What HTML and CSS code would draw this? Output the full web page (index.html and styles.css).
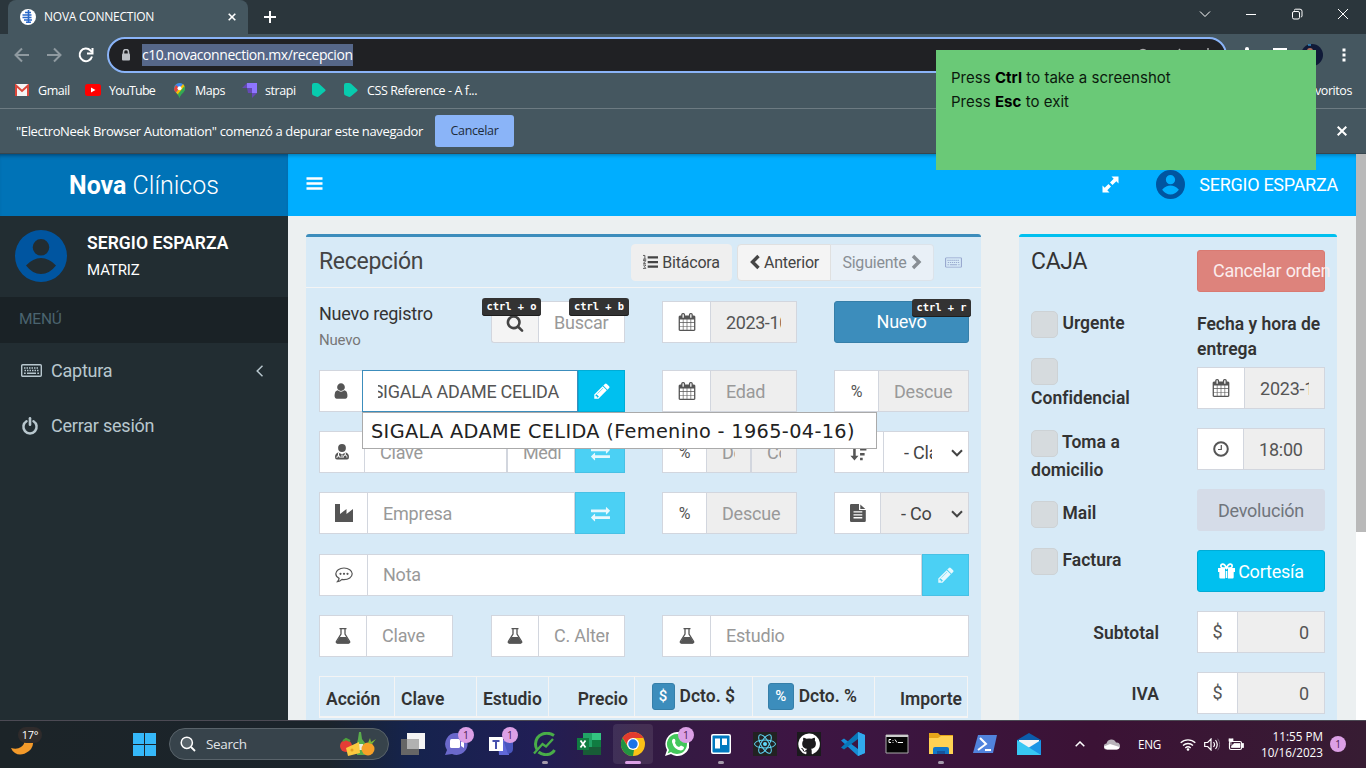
FILE: index.html
```html
<!DOCTYPE html>
<html lang="es">
<head>
<meta charset="utf-8">
<title>NOVA CONNECTION</title>
<link rel="stylesheet" href="styles.css">
</head>
<body>
<svg class="defs" aria-hidden="true">
  <symbol id="user" viewBox="0 0 1792 1792"><path d="M1536 1399q0 109-62.5 187t-150.5 78h-854q-88 0-150.5-78t-62.5-187q0-85 8.5-160.5t31.5-152 58.5-131 94-89 134.5-34.5q131 128 313 128t313-128q76 0 134.5 34.5t94 89 58.5 131 31.5 152 8.5 160.5zm-256-887q0 159-112.5 271.5t-271.5 112.5-271.5-112.5-112.5-271.5 112.5-271.5 271.5-112.5 271.5 112.5 112.5 271.5z"/></symbol>
  <symbol id="pencil" viewBox="0 0 1792 1792"><path d="M491 1536l91-91-235-235-91 91v107h128v128h107zm523-928q0-22-22-22-10 0-17 7l-542 542q-7 7-7 17 0 22 22 22 10 0 17-7l542-542q7-7 7-17zm-54-192l416 416-832 832h-416v-416zm683 96q0 53-37 90l-166 166-416-416 166-165q36-38 90-38 53 0 91 38l235 234q37 39 37 91z"/></symbol>
  <symbol id="calendar" viewBox="0 0 1792 1792"><path d="M192 1664h288v-288h-288v288zm352 0h320v-288h-320v288zm-352-352h288v-320h-288v320zm352 0h320v-320h-320v320zm-352-384h288v-288h-288v288zm736 736h320v-288h-320v288zm-384-736h320v-288h-320v288zm768 736h288v-288h-288v288zm-384-352h320v-320h-320v320zm-352-864v-288q0-13-9.500-22.500t-22.500-9.500h-64q-13 0-22.500 9.500t-9.500 22.500v288q0 13 9.500 22.500t22.500 9.500h64q13 0 22.500-9.500t9.500-22.500zm736 864h288v-320h-288v320zm-384-384h320v-288h-320v288zm384 0h288v-288h-288v288zm32-480v-288q0-13-9.500-22.500t-22.500-9.500h-64q-13 0-22.500 9.500t-9.500 22.500v288q0 13 9.500 22.500t22.500 9.500h64q13 0 22.500-9.500t9.500-22.500zm384-64v1280q0 52-38 90t-90 38h-1408q-52 0-90-38t-38-90v-1280q0-52 38-90t90-38h128v-96q0-66 47-113t113-47h64q66 0 113 47t47 113v96h384v-96q0-66 47-113t113-47h64q66 0 113 47t47 113v96h128q52 0 90 38t38 90z"/></symbol>
  <symbol id="search" viewBox="0 0 1792 1792"><path d="M1216 832q0-185-131.500-316.500t-316.500-131.500-316.500 131.500-131.500 316.500 131.500 316.500 316.500 131.500 316.500-131.500 131.500-316.500zm512 832q0 52-38 90t-90 38q-54 0-90-38l-343-342q-179 124-399 124-143 0-273.500-55.500t-225-150-150-225-55.500-273.500 55.500-273.500 150-225 225-150 273.500-55.500 273.500 55.500 225 150 150 225 55.500 273.500q0 220-124 399l343 343q37 37 37 90z"/></symbol>
  <symbol id="power" viewBox="0 0 18 18"><path d="M5.500 4.200a6.600 6.600 0 1 0 7 0" fill="none" stroke="currentColor" stroke-width="2.500" stroke-linecap="round"/><path d="M9 1.300v6.500" stroke="currentColor" stroke-width="2.600" stroke-linecap="round"/></symbol>
  <symbol id="exchange" viewBox="0 0 1792 1792"><path d="M1792 1184v192q0 13-9.500 22.500t-22.500 9.500h-1376v192q0 13-9.500 22.500t-22.500 9.500q-12 0-24-10l-319-320q-9-9-9-22 0-14 9-23l320-320q9-9 23-9 13 0 22.500 9.500t9.500 22.500v192h1376q13 0 22.500 9.500t9.500 22.500zm0-544q0 14-9 23l-320 320q-9 9-23 9-13 0-22.500-9.500t-9.500-22.500v-192h-1376q-13 0-22.500-9.500t-9.500-22.500v-192q0-13 9.500-22.500t22.500-9.500h1376v-192q0-14 9-23t23-9q12 0 24 10l319 319q9 9 9 23z"/></symbol>
  <symbol id="doctor" viewBox="0 0 14 16"><circle cx="7" cy="4" r="3.900"/><path d="M3 8.500Q0 9.500 0 13q0 2.500 2 2.500h10q2 0 2-2.500 0-3.500-3-4.500L7 10.300z"/><path d="M3.500 9v3.500M2 14v-.8a1.500 1.500 0 0 1 3 0v.8M10.300 9v2.200M8.500 13.500v-.8a1.700 1.700 0 0 1 3.400 0v.8M7 10.500V14" stroke="#fff" fill="none"/></symbol>
  <symbol id="industry" viewBox="0 0 18 18"><path d="M0 0h5v10l6.500-5v5L18 5v13H0z"/></symbol>
  <symbol id="comment" viewBox="0 0 18 16"><path d="M9 1c4.500 0 8.200 2.600 8.200 5.800S13.500 12.600 9 12.600q-1 0-2-.2-2 2-4.500 2.200 1.300-1.300 1.600-3.200C2 10.300.8 8.700.8 6.800.8 3.600 4.500 1 9 1z" fill="none" stroke="currentColor" stroke-width="1.200"/><circle cx="5.500" cy="6.800" r="1.100"/><circle cx="9" cy="6.800" r="1.100"/><circle cx="12.500" cy="6.800" r="1.100"/></symbol>
  <symbol id="flask" viewBox="0 0 16 16"><path d="M4.500.7h7M6 1v5L1.500 13.200Q.7 15 2.500 15h11q1.800 0 1-1.800L10 6V1" fill="none" stroke="currentColor" stroke-width="1.300"/><path d="M4.500 9h7l3 5q0 1.500-1 1.500h-11q-1.500 0-1-1.500z"/></symbol>
  <symbol id="sort" viewBox="0 0 17 17"><path d="M3 0h2.400v12H8l-3.800 4.500L.4 12H3zM9.500 0H17v2.400H9.500zM9.500 4.700h6V7h-6zM9.500 9.400h4.300v2.300H9.500zM9.500 14H12v2.400H9.500z"/></symbol>
  <symbol id="file" viewBox="0 0 16 18"><path fill-rule="evenodd" d="M1.300 0H9v6h6.800v10.800Q15.800 18 14.500 18H1.300Q0 18 0 16.800V1.200Q0 0 1.300 0zm2.200 7.300v1.300h8.800V7.300zm0 2.900v1.300h8.800v-1.300zm0 2.900v1.300h8.800v-1.300zM10.300.4l5 4.500h-5z"/></symbol>
  <symbol id="clock" viewBox="0 0 16 16"><circle cx="8" cy="8" r="6.800" fill="none" stroke="currentColor" stroke-width="2"/><path d="M8.300 4v4.500H5" fill="none" stroke="currentColor" stroke-width="1.200"/></symbol>
  <symbol id="gift" viewBox="0 0 17 16"><path d="M0 5h7v4H0zM10 5h7v4h-7zM1.300 9H7v6.500H2.500q-1.200 0-1.200-1.200zM10 9h5.700v5.300q0 1.200-1.200 1.200H10zM7.700 8h1.600v7H7.700z"/><path d="M8.500 5Q6.500.8 4.500 1.200C2 1.700 2.500 5 5 5h7c2.500 0 3-3.300.5-3.800Q10.500.8 8.500 5z" fill="none" stroke="currentColor" stroke-width="1.700"/></symbol>
  <symbol id="keyboard" viewBox="0 0 21 13"><rect x=".7" y=".7" width="19.600" height="11.600" rx="1" fill="none" stroke="currentColor" stroke-width="1.400"/><path d="M3 4h15" stroke="currentColor" stroke-width="1.500" stroke-dasharray="1.500 1"/><path d="M3.500 6.500h14.500" stroke="currentColor" stroke-width="1.500" stroke-dasharray="1.500 1"/><path d="M3 9.300h1.700M6 9.300h9M16.300 9.300H18" stroke="currentColor" stroke-width="1.500"/></symbol>
  <symbol id="avatar" viewBox="0 0 52 52"><path fill-rule="evenodd" d="M26 0a26 26 0 1 1 0 52 26 26 0 0 1 0-52zm0 9a8.300 8.300 0 1 0 0 16.600A8.300 8.300 0 0 0 26 9zM11 35.500Q17.500 44 26 44t15-8.500Q34 28 26 28t-15 7.500z"/></symbol>
  <symbol id="bulma" viewBox="0 0 14 14"><path d="M0 2Q0 0 2 0h3q1 0 2 .8l6 5.400q1.200 1 0 2L7 13.200q-1.500 1.200-3 .3L1 12.300Q0 12 0 10z"/></symbol>
</svg>

<header class="browser">
  <div class="tabstrip">
    <div class="tab">
      <svg class="favicon" viewBox="0 0 16 16"><circle cx="8" cy="8" r="8" fill="#fff"/><path d="M8.500 1v13M5 3.500h6M2.500 6h9M2.500 8.500h9M4 11h8M6 13.300h5" stroke="#2a69c9" stroke-width="1.600" fill="none"/></svg>
      <span class="tab-title">NOVA CONNECTION</span>
      <svg class="tab-close" viewBox="0 0 8 8"><path d="M.7.7l6.600 6.600M7.300.7L.7 7.300" stroke="#fff" stroke-width="1.600"/></svg>
    </div>
    <svg class="newtab" viewBox="0 0 12 12"><path d="M6 0v12M0 6h12" stroke="#fff" stroke-width="2"/></svg>
    <div class="window-buttons">
      <svg viewBox="0 0 12 12"><path d="M1 3.500l5 5 5-5" stroke="#fff" fill="none"/></svg>
      <svg viewBox="0 0 12 12"><path d="M1 6.500h10" stroke="#fff"/></svg>
      <svg viewBox="0 0 12 12"><path d="M3.500 2.500V2q0-.8 1-.8H9q2 0 2 2V8q0 1-1.200 1" stroke="#fff" fill="none"/><rect x="1.500" y="3.500" width="7" height="7.500" rx="1.500" stroke="#fff" fill="none"/></svg>
      <svg viewBox="0 0 12 12"><path d="M1 1l10 10M11 1L1 11" stroke="#fff"/></svg>
    </div>
  </div>
  <div class="toolbar">
    <svg class="nav dim" viewBox="0 0 16 16"><path d="M15 8H2M8 1.500L1.500 8 8 14.500"/></svg>
    <svg class="nav dim" viewBox="0 0 16 16"><path d="M1 8h13M8 1.500L14.500 8 8 14.500"/></svg>
    <svg class="nav" viewBox="0 0 16 16"><path d="M14 9.500A6.300 6.300 0 1 1 12.500 3.500L14 5"/><path d="M14.500 1v5.500H9" /></svg>
    <div class="omnibox">
      <svg class="lock" viewBox="0 0 10 12"><path d="M2.500 5V3a2.500 2.500 0 0 1 5 0v2" fill="none" stroke="#bdc1c6" stroke-width="1.500"/><rect x="1" y="4.500" width="8" height="7" rx="1" fill="#bdc1c6"/></svg>
      <span class="url">c10.novaconnection.mx/recepcion</span>
      <svg class="omni-actions" viewBox="0 0 80 14"><circle cx="5" cy="6" r="4.500" fill="none" stroke="#aaa" stroke-width="1.500"/><path d="M41 1l3 4M70 0v5" stroke="#aaa" stroke-width="1.500" fill="none"/></svg>
    </div>
    <svg class="extension" viewBox="0 0 12 16"><path d="M4 2a2 2 0 0 1 4 0v3H4z" fill="#fff"/></svg>
    <span class="panel-icon"></span>
    <svg class="profile" viewBox="0 0 22 22"><circle cx="11" cy="11" r="11" fill="#101a38"/><circle cx="9" cy="7" r="3" fill="#b16e5e"/><path d="M7 1h3" stroke="#39a8ec" stroke-width="1.200"/></svg>
    <svg class="dots" viewBox="0 0 4 14"><path d="M.5.500h3v3h-3zM.5 5.500h3v3h-3zM.5 10.500h3v3h-3z" fill="#fff"/></svg>
  </div>
  <div class="bookmarks">
    <svg class="gmail" viewBox="0 0 14 12"><path fill="#f4f4f4" d="M0 0h14v12H0z"/><path d="M1 12V1.500l6 5.500 6-5.500V12" fill="none" stroke="#dc463a" stroke-width="2"/></svg><span class="b1">Gmail</span>
    <svg class="yt" viewBox="0 0 16 12"><rect width="16" height="12" rx="2.500" fill="#f00"/><path d="M6 3.500v5L10.500 6z" fill="#fff"/></svg><span class="b2">YouTube</span>
    <svg class="maps" viewBox="0 0 11 15"><path d="M5.500 0a5.500 5.500 0 0 1 5.500 5.500C11 9.500 7 10 5.500 15 4 10 0 9.500 0 5.500A5.500 5.500 0 0 1 5.500 0z" fill="#34a853"/><path d="M1 2.500A5.500 5.500 0 0 1 9.800 2L3 9.700Q0 8 0 5.500z" fill="#4285f4"/><path d="M0 5.500L2 2l3 3-3 4.500Q0 8 0 5.500z" fill="#ea4335"/><path d="M2 9.500L9 1q2 2 2 4.500L4.500 12z" fill="#fbbc04"/><path d="M11 5.500c0 4-4 4.500-5.500 9.500L4 11l6.500-8z" fill="#34a853"/><circle cx="5.500" cy="5.300" r="2" fill="#fff"/></svg><span class="b3">Maps</span>
    <svg class="strapi" viewBox="0 0 15 15"><path d="M5 0h10v10h-5V5H5z" fill="#8e75ff"/><path d="M5 0v5H0zM10 10h5l-5 5zM5 5h5v5H6z" fill="#6549b5"/></svg><span class="b4">strapi</span>
    <svg class="bulma1"><use href="#bulma"/></svg>
    <svg class="bulma2"><use href="#bulma"/></svg><span class="b5">CSS Reference - A f...</span>
    <span class="others">Otros favoritos</span>
  </div>
  <div class="infobar">
    <span class="info-text">"ElectroNeek Browser Automation" comenzó a depurar este navegador</span>
    <span class="info-btn">Cancelar</span>
    <svg class="info-close" viewBox="0 0 10 10"><path d="M.7.7l8.600 8.600M9.300.7L.7 9.300" stroke="#fff" stroke-width="2"/></svg>
  </div>
</header>

<main class="app">
  <aside class="sidebar">
    <div class="logo"><span><b>Nova</b> Clínicos</span></div>
    <div class="user-panel">
      <svg class="avatar"><use href="#avatar"/></svg>
      <div><div class="user-name">SERGIO ESPARZA</div><div class="user-site">MATRIZ</div></div>
    </div>
    <div class="menu-head">MENÚ</div>
    <div class="menu-item"><svg class="kb"><use href="#keyboard"/></svg><span>Captura</span><svg class="chev" viewBox="0 0 7 12"><path d="M6.500.8L1.200 6l5.300 5.200" fill="none" stroke="currentColor" stroke-width="1.500"/></svg></div>
    <div class="menu-item"><svg class="pw"><use href="#power"/></svg><span>Cerrar sesión</span></div>
  </aside>
  <section class="page">
    <div class="navbar">
      <svg class="bars" viewBox="0 0 16 13"><path d="M0 1.500h16M0 6.500h16M0 11.500h16" stroke="#fff" stroke-width="2.600"/></svg>
      <svg class="expand" viewBox="0 0 17 17"><path d="M9.500.5H16.500V7.500L14.300 5.300 10.500 9 8 6.500 11.700 2.700zM7.500 16.500H.500V9.500l2.200 2.200L6.500 8 9 10.500 5.300 14.300z" fill="#fff"/></svg>
      <svg class="nav-avatar" viewBox="0 0 52 52"><use href="#avatar" width="52" height="52"/></svg>
      <span>SERGIO ESPARZA</span>
    </div>
    <div class="content">
      <div class="box main-box">
        <div class="box-head">
          <h1>Recepción</h1>
          <span class="btn-sm flat"><svg viewBox="0 0 16 16"><path d="M5 3h11M5 8h11M5 13h11" stroke="currentColor" stroke-width="2.400"/><path d="M0 1h2v4M0 5h3.500M0 6.500h3L.5 9.500H3M0 11.200h3L1.500 13 3 14.800H0" fill="none" stroke="currentColor" stroke-width=".9"/></svg>Bitácora</span>
          <div class="pair">
            <span class="btn-sm"><svg class="arrow" viewBox="0 0 11 16"><path d="M9.500 2L3.500 8l6 6" fill="none" stroke="currentColor" stroke-width="3.400"/></svg>Anterior</span>
            <span class="btn-sm off">Siguiente<svg class="arrow" viewBox="0 0 11 16"><path d="M2 2l6 6-6 6" fill="none" stroke="currentColor" stroke-width="3.400"/></svg></span>
          </div>
          <svg class="kb-link" viewBox="0 0 21 13"><use href="#keyboard" width="21" height="13"/></svg>
        </div>
        <div class="form">
          <div class="row first">
            <div class="record"><div>Nuevo registro</div><small>Nuevo</small></div>
            <div class="group">
              <span class="addon w47 search-add"><svg><use href="#search"/></svg></span><span class="field ph"><i>Buscar</i></span>
              <kbd class="k1">ctrl + o</kbd><kbd class="k2">ctrl + b</kbd>
            </div>
            <div class="group"><span class="addon w48"><svg><use href="#calendar"/></svg></span><span class="field gray"><i class="date">2023-10-16</i></span></div>
            <div class="group"><span class="btn primary">Nuevo</span><kbd class="k3">ctrl + r</kbd></div>
          </div>
          <div class="row">
            <div class="group wide">
              <span class="addon w43"><svg><use href="#user"/></svg></span><span class="field focus"><i>SIGALA ADAME CELIDA</i></span><span class="action w47"><svg><use href="#pencil"/></svg></span>
              <div class="suggest">SIGALA ADAME CELIDA (Femenino - 1965-04-16)</div>
            </div>
            <div class="group"><span class="addon w48"><svg><use href="#calendar"/></svg></span><span class="field gray ph"><i>Edad</i></span></div>
            <div class="group"><span class="addon w44 pct">%</span><span class="field gray ph"><i>Descue</i></span></div>
          </div>
          <div class="row">
            <div class="group wide"><span class="addon w45"><svg class="doc"><use href="#doctor"/></svg></span><span class="field ph w143"><i>Clave</i></span><span class="field ph"><i class="medic">Medico</i></span><span class="action soft w50"><svg class="ex"><use href="#exchange"/></svg></span></div>
            <div class="group"><span class="addon w44 pct">%</span><span class="field gray ph w45f"><i>Descuento</i></span><span class="field gray ph"><i>Comisión</i></span></div>
            <div class="group"><span class="addon w49"><svg><use href="#sort"/></svg></span><span class="field select"><i>- Clasificación</i><svg viewBox="0 0 12 8"><path d="M1 1.300l5 5 5-5" fill="none" stroke="currentColor" stroke-width="2"/></svg></span></div>
          </div>
          <div class="row">
            <div class="group wide"><span class="addon w48"><svg><use href="#industry"/></svg></span><span class="field ph"><i>Empresa</i></span><span class="action soft w50"><svg class="ex"><use href="#exchange"/></svg></span></div>
            <div class="group"><span class="addon w44 pct">%</span><span class="field gray ph"><i>Descue</i></span></div>
            <div class="group"><span class="addon w46"><svg class="doc-icon"><use href="#file"/></svg></span><span class="field gray select"><i>- Co</i><svg viewBox="0 0 12 8"><path d="M1 1.300l5 5 5-5" fill="none" stroke="currentColor" stroke-width="2"/></svg></span></div>
          </div>
          <div class="row">
            <div class="group full"><span class="addon w48"><svg><use href="#comment"/></svg></span><span class="field ph"><i>Nota</i></span><span class="action soft w47"><svg><use href="#pencil"/></svg></span></div>
          </div>
          <div class="row last">
            <div class="group"><span class="addon w47"><svg class="fl"><use href="#flask"/></svg></span><span class="field ph"><i>Clave</i></span></div>
            <div class="group"><span class="addon w47"><svg class="fl"><use href="#flask"/></svg></span><span class="field ph"><i>C. Alterna</i></span></div>
            <div class="group half"><span class="addon w48"><svg class="fl"><use href="#flask"/></svg></span><span class="field ph"><i>Estudio</i></span></div>
          </div>
          <div class="thead">
            <span>Acción</span><span>Clave</span><span>Estudio</span><span class="right">Precio</span>
            <span class="right up"><em>$</em>Dcto. $</span><span class="right up"><em class="wide-em">%</em>Dcto. %</span><span class="right">Importe</span>
          </div>
        </div>
      </div>
      <div class="box cash-box">
        <div class="cash-head"><h1>CAJA</h1><span class="btn danger">Cancelar orden</span></div>
        <div class="cash-grid">
          <div class="checks">
            <label><span class="check"></span> Urgente</label>
            <label><span class="check"></span><br>Confidencial</label>
            <label class="toma"><span class="check"></span> Toma a domicilio</label>
            <label><span class="check"></span> Mail</label>
            <label><span class="check"></span> Factura</label>
          </div>
          <div class="delivery">
            <b>Fecha y hora de entrega</b>
            <div class="group"><span class="addon w47"><svg><use href="#calendar"/></svg></span><span class="field gray"><i>2023-10-16</i></span></div>
            <div class="group"><span class="addon w46"><svg class="fl"><use href="#clock"/></svg></span><span class="field gray"><i>18:00</i></span></div>
            <span class="btn muted">Devolución</span>
            <span class="btn info"><svg><use href="#gift"/></svg>Cortesía</span>
          </div>
        </div>
        <div class="total"><b>Subtotal</b><div class="group"><span class="addon w40">$</span><span class="field gray num"><i>0</i></span></div></div>
        <div class="total"><b>IVA</b><div class="group"><span class="addon w40">$</span><span class="field gray num"><i>0</i></span></div></div>
      </div>
    </div>
  </section>
  <div class="scrollbar"><span></span></div>
</main>

<footer class="taskbar">
  <div class="weather"><svg viewBox="0 0 24 22"><path d="M0 13q6 2 10-1 4-3 4-8l8 1q1 7-4 11-8 6-14 2-3-2-4-5z" fill="#f49a2a"/></svg><span>17°</span></div>
  <svg class="start" viewBox="0 0 23 23"><path d="M0 0h11v11H0zM12 0h11v11H12zM0 12h11v11H0zM12 12h11v11H12z" fill="#35b8f9"/></svg>
  <div class="tsearch">
    <svg class="lens" viewBox="0 0 16 16"><circle cx="6.800" cy="6.800" r="5.600" fill="#59646b" stroke="#fff" stroke-width="1.500"/><path d="M11 11l4 4" stroke="#fff" stroke-width="1.800"/></svg>
    <span>Search</span>
    <svg class="food" viewBox="0 0 38 26"><path d="M18 8l1-7h2l1 7 3 4v12h-8V12z" fill="#5aad4c"/><path d="M17 13h6v6h-6z" fill="#e8ede0"/><circle cx="6" cy="15" r="6" fill="#e53d35"/><path d="M3 10l3-2 4 2" stroke="#4da23c" stroke-width="2" fill="none"/><circle cx="28" cy="18" r="6.500" fill="#f7a028"/><path d="M28 12l2-5 1 4 5-3-4 5z" fill="#7db635"/><path d="M6 17l13-6 1 11-12 3z" fill="#fbc93f"/><circle cx="12" cy="19" r="1.500" fill="#e39c20"/></svg>
  </div>
  <div class="apps">
    <div><svg viewBox="0 0 24 24"><path d="M6 1h18v16H6z" fill="#f4f4f4"/><path d="M0 7h18v16H0z" fill="#666"/><path d="M6 7h12v10H6z" fill="#b1b1b1"/></svg></div>
    <div><svg viewBox="0 0 24 24"><path d="M12 1a11 11 0 1 1-5 21L0 23l2-5A11 11 0 0 1 12 1z" fill="#6a68cb"/><rect x="5" y="7" width="10" height="9" rx="1.500" fill="#fff"/><path d="M16 10l3-2v8l-3-2z" fill="#fff"/></svg><mark>1</mark></div>
    <div><svg viewBox="0 0 24 24"><path d="M9 8h11v15H10z" fill="#6068d8"/><path d="M15 10h9v7q0 4-5 5z" fill="#4956bf"/><path d="M0 5h14v14H0z" fill="#fff"/><path d="M3.500 8h7v2H8v7H6v-7H3.500z" fill="#4650ad"/></svg><mark>1</mark></div>
    <div class="run"><svg viewBox="0 0 24 24"><path d="M21 3.500C14-1 3 1.500 2.500 12c0 2 .5 4 1.500 5.500M5.500 20c5 4 13 3.500 16-2" fill="none" stroke="#49ad48" stroke-width="3"/><path d="M1 21.500L9.500 12l3.500 2.500L20 7" fill="none" stroke="#49ad48" stroke-width="2.300"/></svg></div>
    <div><svg viewBox="0 0 24 24"><path d="M6 1h9v22H6z" fill="#21a366"/><path d="M15 1h9v7h-9z" fill="#33c481"/><path d="M15 8h9v8h-9z" fill="#107c41"/><path d="M6 15h18v8H6z" fill="#185c37"/><path d="M0 6h12v12H0z" fill="#107c41"/><path d="M3.500 8.500l5 7M8.500 8.500l-5 7" stroke="#fff" stroke-width="1.800"/></svg></div>
    <div class="active"><svg viewBox="0 0 24 24"><circle cx="12" cy="12" r="12" fill="#fbc116"/><path d="M1.600 6A12 12 0 0 1 22.400 6H12L7 14z" fill="#e33b2e"/><path d="M1.600 6L7 15l6 3-1 6A12 12 0 0 1 1.600 6z" fill="#229342"/><circle cx="12" cy="12" r="6" fill="#fff"/><circle cx="12" cy="12" r="4.700" fill="#1a73e8"/></svg></div>
    <div><svg viewBox="0 0 24 24"><path d="M12 0a12 12 0 1 1-6 22L0 24l2-6A12 12 0 0 1 12 0z" fill="#fff"/><path d="M12 2a10 10 0 1 1-6 18l-3.500 1.500L4 18A10 10 0 0 1 12 2z" fill="#43c75b"/><path d="M8 7q2-1 2.500 2L10 11q1 3 4 4l2-1.500 3 1.500q0 3-3 3.500Q9 18 7 10q-.3-2 1-3z" fill="#fff"/></svg><mark>1</mark></div>
    <div class="run"><svg viewBox="0 0 24 24"><rect x="2" y="2" width="20" height="20" rx="2" fill="#fff"/><rect x="3.500" y="3.500" width="17" height="17" rx="1" fill="#0079bf"/><path d="M6 6.500h5v10H6zM13 6.500h5V13h-5z" fill="#fff"/></svg></div>
    <div><svg viewBox="0 0 24 24"><path fill="#222" d="M0 0h24v24H0z"/><g fill="none" stroke="#61dafb" stroke-width="1"><ellipse cx="12" cy="12" rx="10.500" ry="4"/><ellipse cx="12" cy="12" rx="10.500" ry="4" transform="rotate(60 12 12)"/><ellipse cx="12" cy="12" rx="10.500" ry="4" transform="rotate(120 12 12)"/></g><circle cx="12" cy="12" r="2" fill="#61dafb"/></svg></div>
    <div><svg viewBox="0 0 24 24"><path fill="#1b1a1d" d="M0 0h24v24H0z"/><path fill="#fff" d="M12 1.500a10.600 10.600 0 0 0-3.300 20.700c.6.100.7-.3.700-.6v-2c-3 .7-3.600-1.300-3.600-1.300-.5-1.200-1.200-1.500-1.200-1.500-1-.7.100-.7.100-.7 1 .1 1.600 1.100 1.600 1.100 1 1.600 2.500 1.200 3.100.9.100-.7.400-1.200.7-1.400-2.400-.3-4.900-1.200-4.900-5.300 0-1.200.4-2.100 1.100-2.900-.1-.3-.5-1.400.1-2.800 0 0 .9-.3 3 1.100a10 10 0 0 1 5.400 0c2-1.400 2.900-1.100 2.900-1.100.6 1.400.2 2.500.1 2.800.7.800 1.100 1.700 1.100 2.900 0 4.100-2.500 5-4.900 5.300.4.300.7 1 .7 2v2.900c0 .3.200.7.800.6A10.600 10.600 0 0 0 12 1.500z"/></svg></div>
    <div><svg viewBox="0 0 24 24"><path d="M17 0l7 3v18l-7 3L0 8.500l3-2L17 17z" fill="#168cd5"/><path d="M17 7L3 17.500l-3-2L17 0z" fill="#0877b9"/><path d="M17 0l7 3v18l-7 3z" fill="#31a9ed"/></svg></div>
    <div><svg viewBox="0 0 24 24"><path d="M1 3h22v18H1z" fill="#050505" stroke="#aaa"/><path d="M1 3h22v2H1z" fill="#ccc"/><path d="M6 7.500H4v3h2M8 8v.8M8 10v.8M10 7.500l2 3M13 10.500h5" fill="none" stroke="#fff"/></svg></div>
    <div class="run"><svg viewBox="0 0 24 24"><path d="M0 1h9l2 2h13v19H0z" fill="#e6a51a"/><path d="M0 6h9l3-2h12v18H0z" fill="#ffd253"/><path d="M4 22v-5q0-2 2-2h12q2 0 2 2v5z" fill="#1177c8"/><path d="M8 19h8v3H8z" fill="#17539b"/></svg></div>
    <div><svg viewBox="0 0 24 24"><path d="M5 3h19l-4 18H0z" fill="#5183dd"/><path d="M7 6l6 6-8 6M12 18h6" fill="none" stroke="#fff" stroke-width="2"/></svg></div>
    <div><svg viewBox="0 0 24 24"><path d="M0 8l12-7 12 7v3H0z" fill="#0b5cab"/><path d="M2 8h20v8H2z" fill="#f4f4f4"/><path d="M24 8v15H0z" fill="#1a94e5"/><path d="M0 8l24 15H0z" fill="#38c7f3"/></svg></div>
  </div>
  <svg class="up-arrow" viewBox="0 0 10 6"><path d="M.7 5.300L5 1l4.300 4.300" fill="none" stroke="#fff" stroke-width="1.500"/></svg>
  <svg class="cloud" viewBox="0 0 16 11"><path d="M3 10.500a3 3 0 0 1-.5-6A5 5 0 0 1 12 3.500a3.500 3.500 0 0 1 1 7z" fill="#b8b3ba"/><path d="M3 10.500q-3-1-3-3l6-2.500 9.500 3q-.5 2.500-3 2.500z" fill="#fff"/></svg>
  <span class="lang">ENG</span>
  <svg class="wifi" viewBox="0 0 16 13"><path d="M.7 4.800a10.500 10.500 0 0 1 14.600 0M3 7.500a7.200 7.200 0 0 1 10 0M5.300 10a4 4 0 0 1 5.400 0" fill="none" stroke="#fff" stroke-width="1.300"/><circle cx="8" cy="11.500" r="1.300" fill="#fff"/></svg>
  <svg class="volume" viewBox="0 0 16 13"><path d="M.7 4.500h3L7 1v11L3.700 8.500h-3zM9.500 4q2 2.500 0 5M11.500 2q3.500 4.500 0 9" fill="none" stroke="#fff" stroke-width="1.200"/><path d="M13.700.7q4 6 0 11.600" fill="none" stroke="#736075"/></svg>
  <svg class="battery" viewBox="0 0 16 13"><rect x="1.500" y="3.500" width="12" height="8" rx="1.500" fill="none" stroke="#fff" stroke-width="1.200"/><path d="M6 5.500h6v4H3.500V8zM14 5.500h1.700v4H14zM1 .5v3h4v-3M3 4v3" fill="#fff" stroke="#fff" stroke-width=".7"/></svg>
  <div class="clock"><div>11:55 PM</div><div>10/16/2023</div></div>
  <span class="notif">1</span>
</footer>

<div class="toast"><div>Press <b>Ctrl</b> to take a screenshot</div><div>Press <b>Esc</b> to exit</div></div>
</body>
</html>
```
FILE: styles.css
```css
* { box-sizing: border-box; }
body { margin: 0; width: 1366px; height: 768px; overflow: hidden; position: relative; font-family: Roboto, sans-serif; font-size: 18px; color: #333; background: #ecf0f1; }
svg { display: block; flex: none; fill: currentColor; }
.defs { display: none; }
span, b, div { white-space: nowrap; }

/* browser window */
.browser { height: 154px; background: #455760; color: #fff; font: 12.5px "Open Sans", sans-serif; border-bottom: 1px solid #37464e; }
.tabstrip { height: 34px; background: #2b363c; display: flex; align-items: center; padding-left: 8px; }
.tab { width: 240px; height: 34px; background: #455760; border-radius: 8px 8px 0 0; display: flex; align-items: center; padding: 0 12px; }
.favicon { width: 16px; height: 16px; }
.tab-title { margin-left: 8px; font-size: 12px; letter-spacing: -.24px; flex: 1; padding-bottom: 1px; }
.tab-close { width: 8px; height: 8px; }
.newtab { width: 12px; height: 12px; margin-left: 16px; }
.window-buttons { margin-left: auto; display: flex; gap: 34px; padding-right: 17px; margin-top: -6px; }
.window-buttons svg { width: 12px; height: 12px; }
.toolbar { height: 41px; display: flex; align-items: center; padding: 0 20px 0 14px; }
.nav { width: 16px; height: 16px; margin-right: 16px; fill: none; stroke: #fff; stroke-width: 2; }
.nav:nth-child(3) { margin-right: 13px; }
.dim { stroke: #8f9aa0; }
.omnibox { flex: none; width: 1120px; height: 36px; border: 2px solid #8ab4f8; border-radius: 18px; background: #202124; display: flex; align-items: center; padding: 0 0 0 12px; }
.lock { width: 10px; height: 12px; }
.url { margin-left: 11px; width: 211px; height: 22px; line-height: 21px; background: #566789; font-size: 14px; letter-spacing: -.42px; }
.omni-actions { width: 80px; height: 14px; margin-left: 785px; }
.extension { width: 12px; height: 16px; margin-left: 14px; }
.panel-icon { width: 14px; height: 14px; margin-left: 20px; background: #fff; }
.profile { width: 22px; height: 22px; margin-left: 14px; }
.dots { width: 4px; height: 14px; margin-left: auto; }
.bookmarks { height: 33px; display: flex; align-items: center; padding: 0 14px 3px 15px; letter-spacing: -.42px; }
.gmail { width: 14px; height: 12px; }
.b1 { width: 47px; padding-left: 9px; margin-right: 9px; }
.yt { width: 16px; height: 12px; }
.b2 { width: 65px; padding-left: 8px; margin-right: 8px; letter-spacing: -.75px; }
.maps { width: 11px; height: 15px; }
.b3 { width: 57px; padding-left: 10px; }
.strapi { width: 15px; height: 15px; }
.b4 { width: 55px; padding-left: 8px; }
.bulma1, .bulma2 { width: 14px; height: 14px; color: #08cbae; }
.bulma2 { margin-left: 18px; }
.b5 { padding-left: 9px; }
.others { margin-left: auto; }
.infobar { height: 45px; border-top: 1px solid #6d7b82; display: flex; align-items: center; padding: 0 19px 0 16px; }
.info-text { width: 419px; font-size: 13px; letter-spacing: -.36px; }
.info-btn { width: 79px; height: 32px; line-height: 31px; border-radius: 3px; background: #8ab4f8; color: #202c3b; text-align: center; letter-spacing: -.35px; }
.info-close { width: 10px; height: 10px; margin-left: auto; }

/* application shell */
.app { height: 566px; display: flex; overflow: hidden; letter-spacing: -.22px; }
.sidebar { width: 288px; background: #222d32; color: #b8c7ce; }
.logo { height: 62px; background: #0073b7; color: #fff; display: flex; align-items: center; justify-content: center; font-size: 25px; font-weight: 300; letter-spacing: 0; box-shadow: inset 0 4px 4px -3px #003e68; }
.logo b { font-weight: 700; }
.user-panel { height: 81px; display: flex; padding: 14px 15px; color: #fff; }
.avatar { width: 52px; height: 52px; color: #0055a0; margin-right: 20px; }
.user-name { font-size: 17.5px; font-weight: 600; line-height: 26px; letter-spacing: .06px; }
.user-site { font-size: 15px; line-height: 28px; letter-spacing: -.1px; }
.menu-head { height: 46px; line-height: 44px; padding-left: 19px; background: #1a2226; color: #4b646f; font-size: 15.5px; }
.menu-item { height: 55px; display: flex; align-items: center; padding: 0 25px 0 21px; }
.menu-item span { flex: 1; }
.kb { width: 21px; height: 13px; margin-right: 9px; }
.pw { width: 18px; height: 18px; margin-right: 12px; }
.chev { width: 7px; height: 12px; }
.page { width: 1068px; }
.navbar { height: 62px; background: #00aeff; color: #fff; display: flex; align-items: center; padding: 0 18px 2px 18px; box-shadow: inset 0 4px 4px -3px #0071a8; letter-spacing: -.28px; }
.bars { width: 17px; height: 13px; margin-top: -1px; }
.expand { width: 17px; height: 17px; margin-left: auto; margin-right: 37px; }
.nav-avatar { width: 29px; height: 29px; color: #0055a0; margin-right: 14px; }
.content { display: flex; gap: 38px; padding: 18px 18px 0; align-items: flex-start; }
.scrollbar { width: 10px; background: #fff; }
.scrollbar span { display: block; height: 378px; background: #b9b9b9; }

/* boxes */
.box { background: #d7eaf7; border-top: 3px solid #3c8dbc; border-radius: 3px; height: 520px; }
.main-box { width: 675px; }
.box-head { height: 51px; border-bottom: 1px solid #f4f4f4; display: flex; align-items: center; padding: 0 19px 0 13px; }
h1 { margin: 0; font-size: 23px; line-height: 26px; font-weight: 400; color: #444; letter-spacing: -.3px; }
.box-head h1 { flex: 1; }
.btn-sm { height: 37px; padding: 0 13px; border: 1px solid #e0e0e0; border-radius: 4px; background: #f4f4f4; color: #444; font-size: 16px; display: flex; align-items: center; gap: 4px; justify-content: center; }
.btn-sm svg { width: 15px; height: 16px; }
.btn-sm svg.arrow { width: 11px; height: 16px; }
.flat { width: 101px; border-color: #efefef; background: #efefef; }
.pair { display: flex; margin: 0 11px 0 5px; }
.pair .btn-sm { width: 94px; border-radius: 4px 0 0 4px; padding: 0; }
.pair .btn-sm.off { width: 103px; border-left: 0; border-radius: 0 4px 4px 0; background: #e9f0f7; color: #888e94; border-color: #dce3ea; gap: 4px; }
.kb-link { width: 17px; height: 11px; color: #99a9cf; }
.form { padding: 13px 13px 0; }
.row { display: grid; grid-template-columns: 172px 171px 172px 135px; height: 61.2px; }
.row.first { height: 69px; }
.record { line-height: 26px; }
.record small { display: block; font-size: 15px; color: #777; letter-spacing: -.2px; }
.group { position: relative; display: flex; width: 135px; height: 42px; }
.row .group:first-child, .row .group:nth-child(2) { width: 134px; }
.row .group.wide { grid-column: span 2; width: 306px; }
.row .group.wide ~ .group { width: 135px; }
.row .group.full { grid-column: span 4; width: 650px; }
.row .group.half { grid-column: span 2; width: 307px; }
.addon { flex: none; background: #fff; border: 1px solid #d2d6de; border-right: 0; color: #555; display: flex; align-items: center; justify-content: center; }
.addon svg { width: 18px; height: 18px; }
.addon svg.doc { width: 14px; height: 16px; }
.addon svg.doc-icon { width: 16px; height: 18px; }
.addon svg.fl { width: 16px; height: 16px; }
.pct { font-size: 16px; }
.search-add { background: #f4f4f4; border-radius: 3px 0 0 3px; color: #444; padding-top: 1px; }
.field { flex: 1; min-width: 0; background: #fff; border: 1px solid #d2d6de; color: #555; padding: 1px 15px 0; display: flex; align-items: center; }
.field i { flex: 1; font-style: normal; overflow: hidden; text-overflow: clip; line-height: 26px; }
.field i.date { letter-spacing: -.4px; }
.field i.medic { letter-spacing: -.35px; margin-right: -2px; }
.ph { color: #999; }
.gray { background: #eee; }
.focus { border-color: #3c8dbc; }
.focus i { display: flex; justify-content: flex-end; letter-spacing: -.25px; padding-right: 3px; }
.select { padding: 1px 5px 0 20px; color: #444; }
.select svg { width: 12px; height: 8px; margin-left: 19px; }
.num { text-align: right; }
.action { flex: none; background: #00c0ef; border: 1px solid #00acd6; color: #fff; display: flex; align-items: center; justify-content: center; }
.action svg { width: 18px; height: 18px; }
.action svg.ex { width: 19px; height: 19px; }
.soft { background: #4bd0f4; border-color: #48c1e5; color: #e6f8fd; }
.w40 { width: 40px; } .w43 { width: 43px; } .w44 { width: 44px; } .w45 { width: 45px; } .w46 { width: 46px; } .w47 { width: 47px; } .w48 { width: 48px; } .w49 { width: 49px; } .w50 { width: 50px; }
.w143 { flex: none; width: 143px; }
.w45f { flex: none; width: 45px; }
.btn { display: flex; align-items: center; justify-content: center; gap: 3px; width: 100%; height: 42px; border: 1px solid; border-radius: 3px; color: #fff; }
.btn svg { width: 17px; height: 16px; }
.primary { background: #3c8dbc; border-color: #367fa9; padding-bottom: 1px; }
.danger { width: 128px; flex: none; background: #dd837c; border-color: #d97a72; color: #fbecec; justify-content: flex-start; padding: 0 0 1px 15px; letter-spacing: -.28px; }
.muted { background: #d5dce8; border-color: #d5dce8; color: #70757c; }
.info { background: #00c0ef; border-color: #00acd6; }
kbd { position: absolute; height: 18px; width: 59px; border-radius: 3px; background: #333; color: #fff; font: bold 10.4px/17px "DejaVu Sans Mono", monospace; letter-spacing: 0; text-align: center; white-space: nowrap; box-shadow: inset 0 -1px 0 #1d1d1d; }
.k1 { left: -9px; top: -3px; }
.k2 { left: 78px; top: -3px; width: 60px; }
.k3 { left: 78px; top: -2px; }
.suggest { position: absolute; z-index: 2; left: 43px; top: 42px; width: 515px; height: 37px; padding-left: 8px; border: 1px solid #aaa; background: #fff; color: #222; font: 19.3px/37px "DejaVu Sans", sans-serif; letter-spacing: .35px; }
.thead { display: grid; grid-template-columns: 74px 82px 72px 86px 118px 122px 94px; height: 42px; border: 1px solid #f4f4f4; border-bottom-width: 2px; font-weight: 600; font-size: 17.5px; letter-spacing: 0; }
.thead > span { display: flex; align-items: center; padding: 5px 6px 0 6px; border-left: 1px solid #f4f4f4; }
.thead > span:first-child { border-left: 0; }
.thead .right { justify-content: flex-end; }
.thead .up { padding-top: 0; padding-right: 17px; }
em { width: 23px; height: 27px; margin-right: 5px; border: 1px solid #367fa9; border-radius: 3px; background: #3c8dbc; color: #fff; font: 500 15px/25px Roboto, sans-serif; text-align: center; }
.wide-em { width: 26px; }

/* cash register */
.cash-box { width: 318px; border-top-color: #00c0ef; padding: 13px 12px; }
.cash-head { display: flex; justify-content: space-between; height: 61px; }
.cash-head h1 { line-height: 23px; color: #333; }
.cash-grid { display: flex; justify-content: space-between; height: 300px; font-weight: 600; }
.cash-grid .field, .cash-grid .btn { font-weight: 400; }
.checks { width: 128px; font-size: 17.5px; letter-spacing: .03px; margin-top: -1px; }
.checks label { display: block; height: 47px; line-height: 26px; }
.checks label:nth-child(2) { height: 72px; }
.checks .toma { height: 71px; white-space: normal; }
.check { display: inline-block; vertical-align: middle; width: 27px; height: 27px; border: 1px solid #cdd2d5; border-radius: 5px; background: #d6dbde; }
.delivery { width: 128px; }
.delivery b { display: block; white-space: normal; line-height: 25px; padding-top: 1px; height: 56px; font-size: 17.5px; font-weight: 600; letter-spacing: 0; }
.delivery .group, .total .group { width: 128px; margin-bottom: 19.2px; }
.delivery .btn { margin-bottom: 19px; }
.total { display: flex; justify-content: flex-end; gap: 38px; line-height: 44px; }
.total b { font-weight: 600; font-size: 17.5px; letter-spacing: 0; }

/* desktop taskbar */
.taskbar { height: 48px; border-top: 1px solid #4c4a54; display: flex; align-items: center; color: #fff; font: 11.7px "Open Sans", sans-serif; background: linear-gradient(90deg, #1c2428 0, #1b242b 24%, #15234d 30%, #201e55 39%, #321b43 47%, #3d1543 58%, #3b153f 66%, #3b1235 80%, #371c33 100%); padding-bottom: 1px; }
.weather { width: 133px; padding-left: 11px; position: relative; height: 40px; padding-top: 11px; }
.weather svg { width: 24px; height: 22px; }
.weather span { position: absolute; left: 18px; top: 3px; width: 24px; height: 16px; border-radius: 8px; background: #2f2b2b; text-align: center; font-size: 11px; line-height: 15px; letter-spacing: -.3px; }
.start { width: 23px; height: 23px; }
.tsearch { width: 220px; height: 32px; margin-left: 13px; border: 1px solid #59636a; border-radius: 16px; background: #37434b; display: flex; align-items: center; padding: 0 10px; font-size: 13.5px; color: #e1e4e6; }
.lens { width: 16px; height: 16px; margin-right: 10px; }
.tsearch span { flex: 1; letter-spacing: -.35px; }
.food { width: 38px; height: 26px; }
.apps { display: flex; margin-left: 2px; }
.apps div { width: 44px; height: 46px; padding: 11px 10px; position: relative; }
.apps svg { width: 24px; height: 24px; }
.apps mark { position: absolute; left: 23px; top: 6px; width: 16px; height: 16px; border-radius: 50%; background: #dca0e6; color: #4c204f; text-align: center; font-size: 10.5px; line-height: 16px; }
.apps .run::after, .apps .active::after { content: ""; position: absolute; left: 19px; bottom: 3px; width: 6px; height: 3px; border-radius: 2px; background: #a49aab; }
.apps .active::before { content: ""; position: absolute; left: 2px; top: 3px; width: 40px; height: 40px; border-radius: 4px; background: rgba(255,255,255,.09); }
.apps .active svg { position: relative; }
.apps .active::after { left: 14px; width: 16px; background: #dca0e6; }
.up-arrow { width: 10px; height: 6px; margin-left: 24px; }
.cloud { width: 16px; height: 11px; margin-left: 19px; }
.lang { width: 24px; margin-left: 18px; letter-spacing: -.3px; }
.wifi { width: 16px; height: 13px; margin-left: 18px; }
.volume { width: 16px; height: 13px; margin-left: 8px; }
.battery { width: 16px; height: 13px; margin-left: 8px; }
.clock { flex: 1; text-align: right; line-height: 16px; letter-spacing: 0; }
.notif { width: 16px; height: 16px; margin: 0 20px 0 7px; border-radius: 50%; background: #dca0e6; color: #4c204f; text-align: center; font-size: 10px; line-height: 16px; }

.toast { position: absolute; left: 936px; top: 50px; width: 380px; height: 120px; padding: 16px 15px; background: #6ac977; color: #0b1a0d; font: 15px/24px Inter, sans-serif; letter-spacing: .03px; z-index: 5; }
.toast b { font-weight: 700; color: #000; }
```
